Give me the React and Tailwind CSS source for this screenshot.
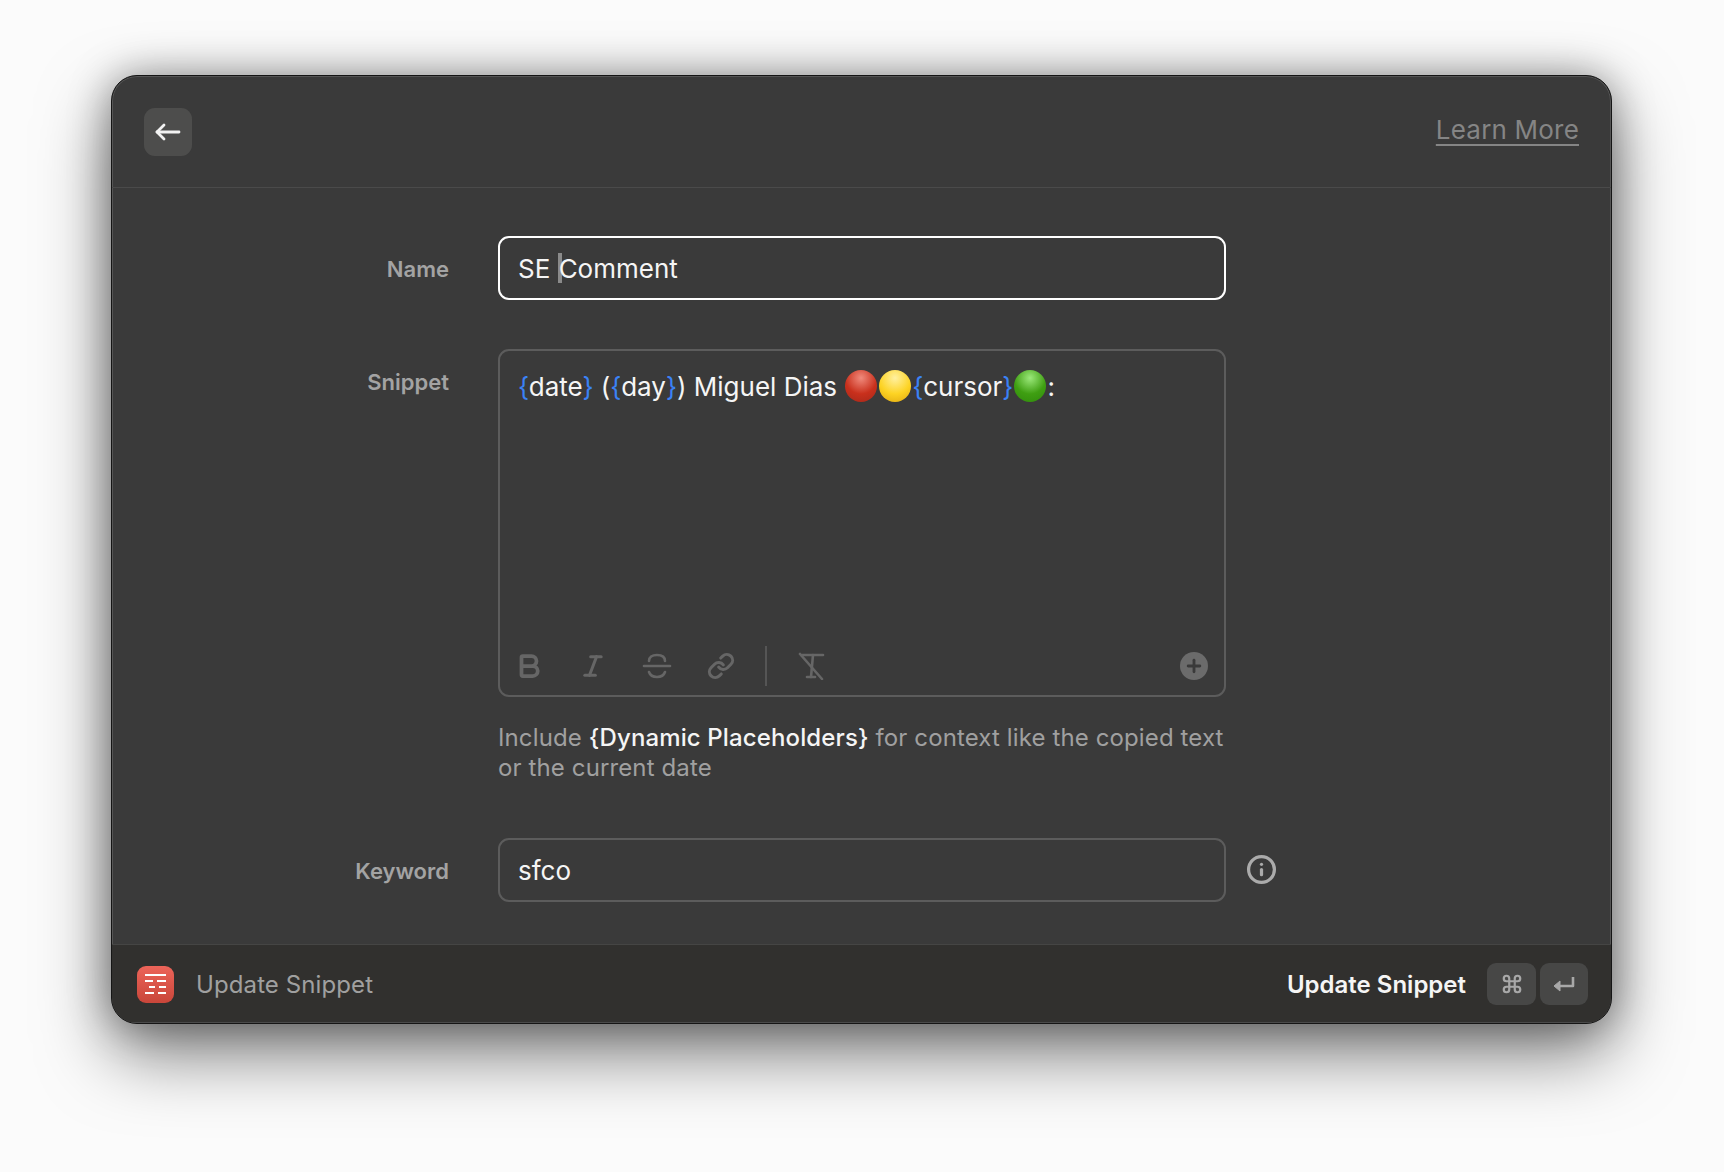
import React from "react";
import { Bold, Italic, Link, Info, Command, Plus } from "lucide-react";

const Token = ({ children }) => (
    <>
        <span className="text-[#3b82f6]">{"{"}</span>
        {children}
        <span className="text-[#3b82f6]">{"}"}</span>
    </>
);

const Ball = ({ color }) => (
    <span className={`inline-block align-[-6px] w-[32px] h-[32px] rounded-full mx-[1px] ${color}`} />
);

const Row = ({ label, labelClass = "", children }) => (
    <div className="flex">
        <div className={`w-[337px] text-right text-[22px] font-semibold text-[#a3a3a3] ${labelClass}`}>
            {label}
        </div>
        <div className="ml-[49px] w-[728px]">{children}</div>
    </div>
);

const BackArrow = () => (
    <svg width="26" height="20" viewBox="0 0 26 20" fill="none" stroke="currentColor" strokeWidth="2.8" strokeLinecap="round" strokeLinejoin="round">
        <path d="M2 10h22" />
        <path d="M9 3l-7 7 7 7" />
    </svg>
);

const StrikeS = () => (
    <svg width="30" height="28" viewBox="0 0 30 28" fill="none" stroke="currentColor" strokeWidth="2.6" strokeLinecap="round">
        <path d="M2 14h26" />
        <path d="M7 9c0-4 3-6 8-6s8 2 8 6" />
        <path d="M7 20c1 3 4 5 8 5s7-2 8-5" />
    </svg>
);

const ReturnKey = () => (
    <svg width="22" height="18" viewBox="0 0 22 18" fill="none" stroke="currentColor" strokeWidth="2.6" strokeLinejoin="round">
        <path d="M20 2v9H5" />
        <path d="M7 6v10l-6-5z" fill="currentColor" strokeWidth="1" />
    </svg>
);

const ClearFormat = () => (
    <svg width="28" height="28" viewBox="0 0 28 28" fill="none" stroke="currentColor" strokeWidth="2.6" strokeLinecap="round">
        <path d="M5 3h21" />
        <path d="M16 3l-2 22" />
        <path d="M10 25h8" />
        <path d="M3 2l22 25" />
    </svg>
);

const SnippetLogo = () => (
    <div className="w-[37px] h-[37px] rounded-[9px] bg-gradient-to-b from-[#ec6459] to-[#c9463a] flex items-center justify-center">
        <svg width="23" height="22" viewBox="0 0 23 22" fill="none" stroke="#fff" strokeWidth="2.2">
            <path d="M1 2h21" />
            <path d="M1 8h8M13 8h9" />
            <path d="M5 14h6M15 14h7" />
            <path d="M1 20h9M14 20h8" />
        </svg>
    </div>
);

const App = () => {
    return (
        <div className="w-[1724px] h-[1172px] bg-[#fbfbfb] pl-[111px] pt-[75px] overflow-hidden font-['Inter',sans-serif]">
            <div className="w-[1501px] h-[949px] flex flex-col rounded-[26px] overflow-hidden border border-[#151515] bg-[#3a3a3a] shadow-[inset_0_0_0_1px_#555555,0_30px_70px_rgba(0,0,0,0.5),0_0_40px_rgba(0,0,0,0.35)]">
                <div className="h-[112px] shrink-0 border-b border-[#4a4a4a] flex items-start justify-between pl-[32px] pr-[32px] pt-[32px]">
                    <div className="w-[48px] h-[48px] rounded-[11px] bg-[#4d4d4c] flex items-center justify-center text-[#f2f2f2]">
                        <BackArrow />
                    </div>
                    <a className="text-[26px] tracking-[0.2px] leading-[36px] mt-[4px] text-[#858585] underline underline-offset-[5px] decoration-2">
                        Learn More
                    </a>
                </div>

                <div className="flex-1 flex flex-col pt-[48px]">
                    <Row label="Name" labelClass="pt-[17px]">
                        <div className="h-[64px] rounded-[11px] border-2 border-white px-[18px] flex items-center text-[26px] text-[#f5f5f5] whitespace-pre">
                            SE <span className="inline-block w-[4px] h-[30px] bg-[#8a8a8a] mr-[-3px]" />Comment
                        </div>
                    </Row>

                    <div className="mt-[49px]">
                        <Row label="Snippet" labelClass="pt-[17px]">
                            <div className="h-[348px] rounded-[11px] border-2 border-[#5c5c5c] flex flex-col">
                                <div className="flex-1 pl-[18px] pt-[18px] text-[26px] leading-[36px] text-[#f5f5f5] whitespace-pre">
                                    <Token>date</Token> (<Token>day</Token>) Miguel Dias{" "}
                                    <Ball color="bg-[radial-gradient(circle_at_50%_25%,#f08a7c,#c9301c_55%,#a5281a)]" />
                                    <Ball color="bg-[radial-gradient(circle_at_50%_25%,#fff0a0,#fdd323_55%,#e0a80f)]" />
                                    <Token>cursor</Token>
                                    <Ball color="bg-[radial-gradient(circle_at_50%_25%,#9be87a,#3f9f12_55%,#2f8a0c)]" />:
                                </div>
                                <div className="h-[58px] shrink-0 flex items-center pl-[14px] pr-[16px] text-[#666666]">
                                    <Bold size={30} strokeWidth={3} />
                                    <Italic size={28} strokeWidth={2.6} className="ml-[35px]" />
                                    <div className="ml-[35px]"><StrikeS /></div>
                                    <Link size={28} strokeWidth={2.6} className="ml-[35px]" />
                                    <div className="w-[2px] h-[40px] bg-[#555555] ml-[30px]" />
                                    <div className="ml-[30px]"><ClearFormat /></div>
                                    <div className="ml-auto w-[28px] h-[28px] rounded-full bg-[#6b6b6b] flex items-center justify-center text-[#3a3a3a]">
                                        <Plus size={20} strokeWidth={3.4} />
                                    </div>
                                </div>
                            </div>
                            <p className="mt-[26px] text-[24px] tracking-[0.12px] leading-[30px] text-[#a0a0a0] whitespace-nowrap">
                                Include <span className="text-[#f5f5f5] font-medium">{"{Dynamic Placeholders}"}</span> for context like the copied text
                                <br />
                                or the current date
                            </p>
                        </Row>
                    </div>

                    <div className="mt-[55px]">
                        <Row label="Keyword" labelClass="pt-[17px]">
                            <div className="relative h-[64px] rounded-[11px] border-2 border-[#5c5c5c] px-[18px] flex items-center text-[26px] text-[#f5f5f5]">
                                sfco
                                <Info size={31} strokeWidth={2.5} className="absolute -right-[53px] top-[14px] text-[#ababab]" />
                            </div>
                        </Row>
                    </div>
                </div>

                <div className="h-[79px] shrink-0 border-t border-[#454544] bg-[#31302e] shadow-[inset_0_-1px_0_#4a4a4a] flex items-center pl-[25px] pr-[23px]">
                    <SnippetLogo />
                    <span className="ml-[22px] mt-[2px] text-[24px] tracking-[0.1px] text-[#a0a0a0]">Update Snippet</span>
                    <span className="ml-auto mt-[2px] text-[24px] font-semibold text-[#f5f5f5]">Update Snippet</span>
                    <div className="ml-[21px] w-[49px] h-[42px] rounded-[9px] bg-[#474746] flex items-center justify-center text-[#a8a8a8]">
                        <Command size={22} strokeWidth={2.4} />
                    </div>
                    <div className="ml-[4px] w-[48px] h-[42px] rounded-[9px] bg-[#474746] flex items-center justify-center text-[#a8a8a8]">
                        <ReturnKey />
                    </div>
                </div>
            </div>
        </div>
    );
};

export default App;
